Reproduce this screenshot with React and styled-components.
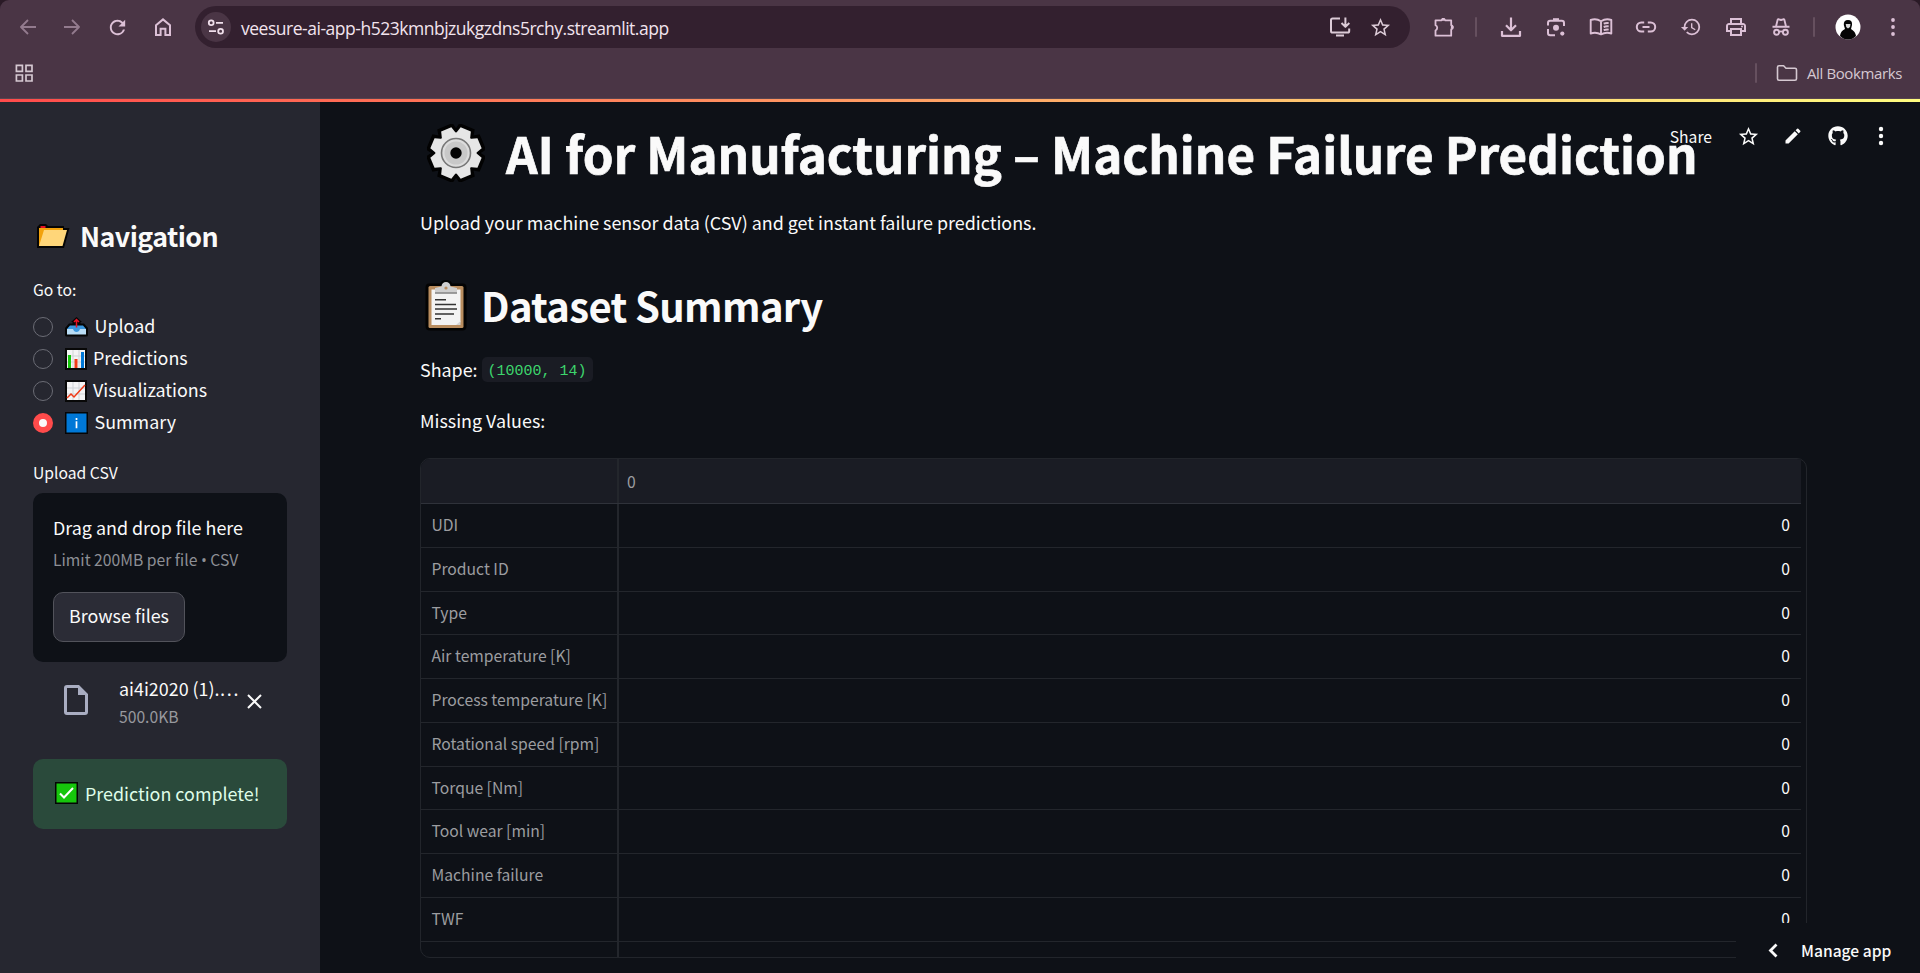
import React from "react";
import styled, { createGlobalStyle } from "styled-components";
import { FaGithub } from "react-icons/fa";
import { MdHistory, MdOutlinePrint, MdEdit, MdStarBorder, MdRefresh } from "react-icons/md";

const Global = createGlobalStyle`
  * { box-sizing: border-box; }
  html, body { margin: 0; height: 973px; overflow: hidden; background: #0e1117; }
  body { font-family: "Noto Sans CJK SC", "Open Sans", sans-serif; color: #fafafa; }
  svg { display: block; flex: none; }
  h1, h2, h3, p { margin: 0; }
`;

const Window = styled.div`
  width: 1920px;
  height: 973px;
  display: flex;
  flex-direction: column;
  overflow: hidden;
`;

/* browser chrome */
const ChromeBack = styled.div`
  background: #2a1a26;
  height: 99px;
  flex: none;
`;
const Chrome = styled.div`
  height: 99px;
  background: #4a3545;
  border-radius: 9px 9px 0 0;
  border-bottom: 1px solid #57454f;
  color: #dcc0d6;
  font-family: "Open Sans", "Noto Sans", sans-serif;
`;
const Toolbar = styled.div`
  height: 54px;
  display: flex;
  align-items: center;
  padding-left: 5px;
`;
const ToolSlot = styled.div`
  width: 45px;
  height: 32px;
  display: flex;
  align-items: center;
  justify-content: center;
  opacity: ${(p) => (p.$dim ? 0.5 : 1)};
`;
const Omnibox = styled.div`
  width: 1215px;
  height: 42px;
  margin-left: 10px;
  border-radius: 21px;
  background: #33202f;
  display: flex;
  align-items: center;
  padding: 0 10px 0 6px;
`;
const SiteInfo = styled.div`
  width: 30px;
  height: 30px;
  border-radius: 50%;
  background: #4a3545;
  display: flex;
  align-items: center;
  justify-content: center;
  color: #f0dfeb;
`;
const Url = styled.span`
  flex: 1;
  margin-left: 10px;
  padding-top: 1px;
  font-size: 17.5px;
  line-height: 24px;
  letter-spacing: -0.48px;
  color: #f2e4ee;
  white-space: nowrap;
`;
const OmniIcon = styled.div`
  width: 40px;
  display: flex;
  justify-content: center;
  color: #dccbd7;
`;
const Tools = styled.div`
  display: flex;
  align-items: center;
  padding-left: 11px;
`;
const Split = styled.div`
  width: 2px;
  height: 20px;
  border-radius: 1px;
  background: #66505f;
  margin: 0 ${(p) => p.$right}px 0 ${(p) => p.$left}px;
`;
const BookmarkBar = styled.div`
  height: 37px;
  display: flex;
  align-items: center;
  padding-left: 15px;
  color: #d5c8d1;
`;
const AllBookmarks = styled.div`
  display: flex;
  align-items: center;
  margin-left: auto;
  margin-right: 18px;
  font-size: 15px;
  letter-spacing: -0.38px;
  white-space: nowrap;
  gap: 9px;
`;

/* app shell */
const Decoration = styled.div`
  height: 3px;
  flex: none;
  background: linear-gradient(90deg, #ff4b4b, #fffd80);
`;
const AppBody = styled.div`
  flex: 1;
  min-height: 0;
  display: flex;
  position: relative;
`;
const Sidebar = styled.aside`
  width: 320px;
  background: #262730;
  padding: 116px 33px 0;
  flex: none;
`;
const NavTitle = styled.h2`
  height: 36px;
  display: flex;
  align-items: center;
  gap: 10px;
  padding-left: 3px;
  font-size: 26.8px;
  line-height: 36px;
  font-weight: 600;
  letter-spacing: -0.55px;
`;
const FieldLabel = styled.div`
  height: 26px;
  margin-top: ${(p) => p.$top}px;
  font-size: 15.7px;
  line-height: 26px;
  white-space: nowrap;
`;
const RadioGroup = styled.div`
  margin-top: 8px;
`;
const RadioRow = styled.div`
  height: 32px;
  display: flex;
  align-items: center;
`;
const RadioDot = styled.span`
  width: 20px;
  height: 20px;
  border-radius: 50%;
  border: ${(p) => (p.$on ? "6px solid #ff4b4b" : "1px solid #6b6c75")};
  background: ${(p) => (p.$on ? "#fafafa" : "#262730")};
  margin-right: 12px;
`;
const RadioText = styled.span`
  font-size: 17.9px;
  line-height: 30px;
  padding-bottom: 4px;
  margin-left: ${(p) => p.$gap}px;
`;
const Dropzone = styled.div`
  height: 169px;
  margin-top: 7px;
  border-radius: 10px;
  background: #0e1117;
  padding: 19px 20px 0;
  white-space: nowrap;
`;
const DropText = styled.div`
  font-size: 17.9px;
  line-height: 30px;
`;
const DropHint = styled.div`
  height: 26px;
  margin-top: 5px;
  font-size: 15.7px;
  line-height: 26px;
  color: #8d8f95;
`;
const Bullet = styled.span`
  font-family: "Open Sans", sans-serif;
  line-height: 20px;
`;
const Browse = styled.button`
  display: block;
  width: 132px;
  height: 50px;
  margin-top: 19px;
  padding: 0 0 4px;
  border: 1px solid #52535b;
  border-radius: 10px;
  background: #2b2c36;
  color: #fafafa;
  font: 17.9px "Noto Sans CJK SC", sans-serif;
  white-space: nowrap;
`;
const FileRow = styled.div`
  display: flex;
  margin-top: 11px;
  height: 57px;
  padding-left: 31px;
`;
const FileIcon = styled.div`
  padding-top: 12px;
  width: 55px;
`;
const FileInfo = styled.div`
  width: 121px;
  white-space: nowrap;
`;
const FileName = styled.div`
  font-size: 17.9px;
  line-height: 30px;
`;
const FileSize = styled.div`
  padding-top: 1px;
  font-size: 15.7px;
  line-height: 26px;
  color: #98999e;
`;
const FileClose = styled.div`
  padding: 21px 0 0 7px;
`;
const Success = styled.div`
  height: 70px;
  margin-top: 29px;
  border-radius: 10px;
  background: #2a4a3b;
  color: #dffde9;
  display: flex;
  align-items: center;
  gap: 7px;
  padding: 0 0 3px 22px;
  font-size: 17.9px;
  white-space: nowrap;
`;

/* main column */
const Main = styled.main`
  flex: 1;
  padding: 15px 112px 0 100px;
`;
const PageTitle = styled.h1`
  height: 72px;
  display: flex;
  align-items: center;
  gap: 21px;
  padding-left: 7px;
  font-size: 49.3px;
  line-height: 72px;
  font-weight: 700;
  white-space: nowrap;
  -webkit-text-stroke: 0.7px #fafafa;
`;
const Section = styled.h2`
  height: 54px;
  margin-top: 41px;
  padding-left: 5px;
  display: flex;
  align-items: center;
  gap: 14px;
  font-size: 40px;
  line-height: 54px;
  font-weight: 600;
  letter-spacing: -0.68px;
  white-space: nowrap;
`;
const Paragraph = styled.p`
  height: 30px;
  margin-top: ${(p) => p.$top}px;
  font-size: 17.9px;
  line-height: 30px;
  white-space: nowrap;
  display: flex;
  align-items: center;
`;
const Code = styled.code`
  width: 111px;
  height: 25px;
  margin-left: 4px;
  border-radius: 5px;
  background: #1a1c24;
  color: #3dd56d;
  font: 15px "Liberation Mono", monospace;
  line-height: 29px;
  text-align: center;
`;
const Table = styled.div`
  width: 1387px;
  height: 500px;
  margin-top: 23px;
  border: 1px solid #22252b;
  border-radius: 10px;
  overflow: hidden;
  font-size: 15.7px;
`;
const Row = styled.div`
  width: 1380px;
  height: ${(p) => (p.$head ? 45 : 43.77)}px;
  display: flex;
  background: ${(p) => (p.$head ? "#1a1c24" : "transparent")};
  border-bottom: 1px solid ${(p) => (p.$head ? "#2f323a" : "#23262c")};
`;
const IndexCell = styled.div`
  width: 198px;
  padding: 8px 0 0 10.5px;
  border-right: 2px solid #23262c;
  color: #9c9da0;
  line-height: 26px;
  white-space: nowrap;
`;
const HeadCell = styled.div`
  flex: 1;
  padding: 10px 0 0 8px;
  color: #9c9da0;
  line-height: 26px;
`;
const ValueCell = styled.div`
  flex: 1;
  padding: 8px 11px 0 0;
  line-height: 26px;
  text-align: right;
`;

/* overlays */
const AppActions = styled.div`
  position: absolute;
  top: 18px;
  right: 8px;
  height: 32px;
  display: flex;
  align-items: center;
`;
const Share = styled.span`
  font-size: 15.7px;
  line-height: 26px;
  margin-right: 24px;
  padding-top: 1px;
`;
const Action = styled.div`
  width: ${(p) => p.$w}px;
  display: flex;
  justify-content: center;
`;
const ManageApp = styled.div`
  position: absolute;
  right: 0;
  bottom: 0;
  width: 184px;
  height: 50px;
  background: #0e1117;
  display: flex;
  align-items: center;
  gap: 23px;
  padding: 4px 0 0 32px;
  font-size: 15.6px;
  font-weight: 500;
  white-space: nowrap;
`;

const Line = ({ w = 20, h = 20, sw = 1.8, box, children }) => (
  <svg width={w} height={h} viewBox={box || `0 0 ${w} ${h}`} fill="none" stroke="currentColor" strokeWidth={sw} strokeLinejoin="round">
    {children}
  </svg>
);

const BackIcon = () => (
  <Line w={18} h={18}><path d="M17 9H2.5M9 2 2 9l7 7" /></Line>
);
const ForwardIcon = () => (
  <Line w={18} h={18}><path d="M0 9h14.500M8 2l7 7-7 7" /></Line>
);
const HomeIcon = () => (
  <Line w={18} h={20} sw={2}><path d="M2 8.2 9 2.4l7 5.8V18h-4.6v-6.2H6.6V18H2Z" strokeLinejoin="miter" /></Line>
);
const TuneIcon = () => (
  <Line w={18} h={16}>
    <circle cx="4.2" cy="3.8" r="2.4" /><path d="M9 3.8h7M2 12.2h7" /><circle cx="13.6" cy="12.2" r="2.4" />
  </Line>
);
const InstallIcon = () => (
  <Line w={22} h={22} sw={2}>
    <path d="M11 2.5H3.6Q2 2.5 2 4v11q0 1.6 1.6 1.6h15q1.6 0 1.6-1.6v-2.5M16.4 1.5v9M12.5 7l3.9 3.9L20.3 7M7 19.5h8" />
  </Line>
);
const PuzzleIcon = () => (
  <Line w={22} h={22}>
    <path d="M2.5 4.3h5.8a2.2 2.2 0 0 1 4 0h5.9v4.9a2.2 2.2 0 0 1 0 4.2v6.3H2.5v-5.2a2.9 2.9 0 0 0 0-5.3Z" />
    <path d="M9 3.4h2.6M19.2 10v2.6" strokeWidth="2.6" />
  </Line>
);
const DownloadIcon = () => (
  <Line w={22} h={22} sw={2.2}><path d="M11 1.5v12.5M6 9.3l5 5 5-5M2 15v4.8h18V15" /></Line>
);
const LensIcon = () => (
  <Line w={20} h={20} sw={2}>
    <path d="M2 8.5V6q0-2.2 2.2-2.2h11.6Q18 3.8 18 6v3M2 12v4q0 2.2 2.2 2.2H9" />
    <path d="M7 2.4h6" strokeWidth="2.4" />
    <circle cx="10" cy="10.7" r="3" fill="currentColor" stroke="none" />
    <circle cx="16.3" cy="16.6" r="2.1" fill="currentColor" stroke="none" />
  </Line>
);
const BookIcon = () => (
  <Line w={24} h={20} sw={1.9}>
    <path d="M12 4.2Q7 1 1.7 3v13.500Q7 14.600 12 17.400Q17 14.600 22.300 16.500V3Q17 1 12 4.200Zm0 0v13.200M14.700 6.700q2.500-1 5-.6M14.700 10q2.500-1 5-.6M14.700 13.200q2.500-1 5-.6" />
  </Line>
);
const LinkIcon = () => (
  <Line w={22} h={14} sw={2}><path d="M9.2 2.500H6.300a4.500 4.500 0 0 0 0 9h2.900M12.800 2.500h2.900a4.500 4.500 0 0 1 0 9h-2.900M7.500 7h7" /></Line>
);
const IncognitoIcon = () => (
  <Line w={20} h={20} sw={1.9}>
    <path d="M1.500 9.800h17M5 9.500 6.600 2.900q.3-.8 1.200-.6L10 3l2.200-.7q.9-.2 1.200.6L15 9.500M8 15q2-1.200 4 0" />
    <circle cx="5.6" cy="15.3" r="2.5" /><circle cx="14.4" cy="15.3" r="2.5" />
  </Line>
);
const Dots = ({ r = 1.9 }) => (
  <svg width="6" height="20" viewBox="0 0 6 20" fill="currentColor">
    <circle cx="3" cy="3" r={r} /><circle cx="3" cy="10" r={r} /><circle cx="3" cy="17" r={r} />
  </svg>
);
const Avatar = () => (
  <svg width="26" height="26" viewBox="0 0 26 26">
    <circle cx="13" cy="13" r="12.5" fill="#fff" />
    <path d="M5 22q.5-5 5-7l-1.200-4Q8.500 6 13 6t4 5l-1 4q4.500 2.500 5 7-3.500 3.500-8 3.500T5 22Z" fill="#050505" />
    <path d="M10.700 10h4.800l-.5 3-2 1.500-1.800-1.500Z" fill="#d8d8d8" />
  </svg>
);
const AppsIcon = () => (
  <Line w={18} h={18} sw={1.7}><path d="M1.400 1.400h6v6h-6zM11 1.400h6v6h-6zM1.400 11h6v6h-6zM11 11h6v6h-6z" strokeLinejoin="miter" /></Line>
);
const FolderLine = () => (
  <Line w={22} h={18} sw={1.6}><path d="M1.500 14.700V3.300q0-1.500 1.500-1.500h4.600l2.400 2.400h9q1.500 0 1.500 1.500v9q0 1.500-1.500 1.500H3q-1.500 0-1.500-1.500Z" /></Line>
);
const FileOutline = () => (
  <svg width="24" height="30" viewBox="0 0 24 30">
    <path d="M3 0h12l9 9v18q0 3-3 3H3q-3 0-3-3V3q0-3 3-3Zm0 3v24h18V10h-7V3Z" fill="#a9adc1" fillRule="evenodd" />
  </svg>
);

const FolderEmoji = () => (
  <svg width="34" height="25" viewBox="0 0 34 25">
    <path d="M1 24V3l3-3h6l2 2h16v2h5.500L28 24Z" fill="#050505" />
    <path d="M3 22V4h24v4L22 22Z" fill="#f2a20c" />
    <path d="M4.500 2h5v2h-5z" fill="#e81123" />
    <path d="M8 6h23l-4.500 16H3Z" fill="#ffd679" />
  </svg>
);
const UploadEmoji = () => (
  <svg width="23" height="20" viewBox="0 0 23 20">
    <path d="M1.500 19.500Q0 19.500 0 18v-7l4-4.500h3.500V5H6L11.500 0 17 5h-1.500v1.500H19l4 4.500v7q0 1.500-1.500 1.500Z" fill="#050505" />
    <path d="M2 12h19v5.500H2Z" fill="#b9dcf5" />
    <path d="M5 8.500h13l3 3.500h-6q-1 3-3.500 3T8 12H2Z" fill="#3a96dd" />
    <path d="M11.500 2.500v8M9 5l2.500-2.500L14 5" fill="none" stroke="#e81123" strokeWidth="1.500" />
  </svg>
);
const SheetGrid = ({ children }) => (
  <svg width="22" height="22" viewBox="0 0 22 22">
    <path d="M0 0h22v22H0z" fill="#080808" />
    <path d="M2 2h18v18H2z" fill="#f4f4f4" />
    <path d="M8 2v18M14 2v18M2 8h18M2 14h18" stroke="#d0d3d6" strokeWidth="1" />
    {children}
  </svg>
);
const BarsEmoji = () => (
  <SheetGrid>
    <path d="M3 7h3v13H3z" fill="#16c60c" /><path d="M9.500 11h3v9h-3z" fill="#f03a17" /><path d="M16 4h3v16h-3z" fill="#0078d7" />
  </SheetGrid>
);
const ChartEmoji = () => (
  <SheetGrid><path d="m2 18 4-4 3 3L20 5" fill="none" stroke="#f03a17" strokeWidth="1.500" /></SheetGrid>
);
const InfoEmoji = () => (
  <svg width="23" height="22" viewBox="0 0 23 22">
    <path d="M0 0h23v22H0z" fill="#050505" /><path d="M1.500 1.500h20v19h-20z" fill="#0078d7" />
    <path d="M11.500 6v2M11.500 9.300v7" stroke="#fff" strokeWidth="1.700" />
  </svg>
);
const CheckEmoji = () => (
  <svg width="23" height="22" viewBox="0 0 23 22">
    <path d="M0 0h23v22H0z" fill="#050505" /><path d="M1.500 1.500h20v19h-20z" fill="#16c60c" />
    <path d="m5 11.500 4 4 9-9.500" fill="none" stroke="#fff" strokeWidth="2" />
  </svg>
);
const gearTeeth = [22.5, 67.5, 112.5, 157.5, 202.5, 247.5, 292.5, 337.5];
const GearEmoji = () => (
  <svg width="58" height="58" viewBox="-29 -29 58 58">
    <g fill="#e6e6e6" stroke="#020202" strokeWidth="8">
      <circle r="20.5" />
      {gearTeeth.map((a) => <path key={a} transform={`rotate(${a})`} d="M-6.500-17-5-25H5L6.500-17Z" />)}
    </g>
    <g fill="#e6e6e6">
      <circle r="20.5" />
      {gearTeeth.map((a) => <path key={a} transform={`rotate(${a})`} d="M-8-17-5.500-25.500H5.500L8-17Z" />)}
    </g>
    <circle r="14.5" fill="#dcdcdc" stroke="#777" strokeWidth="1.6" />
    <circle r="11.5" fill="#c8c8c8" />
    <circle r="5.7" fill="#020202" />
  </svg>
);
const ClipboardEmoji = () => (
  <svg width="42" height="51" viewBox="0 0 42 51">
    <path d="M4 3.500h11Q16 0 21 0t6 3.500h11q3.500 0 3.500 4V46q0 4.500-4 4.500H5Q.5 50.500.5 46V7.500q0-4 3.500-4Z" fill="#030303" />
    <rect x="3.500" y="6" width="35" height="42" rx="1.5" fill="#b98d5f" />
    <path d="M6.500 9.500h29V42l-3 3h-26z" fill="#f3f3f3" />
    <path d="M35.500 41v4H31Z" fill="#d5d5d5" />
    <path d="M10 9V8l6.500-1.500a4.500 4.500 0 0 1 9 0L32 8v4.500H10Z" fill="#cfcfcf" />
    <path d="M10 13h22" stroke="#777" strokeWidth="1.4" />
    <circle cx="21" cy="8" r="1.6" fill="#b98d5f" />
    <path d="M10 19.800h11M10 24.500h21M10 29h22M10 34h19M10 38.700h6" stroke="#333" strokeWidth="1.6" />
  </svg>
);

const navItems = [
  { label: "Upload", Icon: UploadEmoji, gap: 6.5 },
  { label: "Predictions", Icon: BarsEmoji, gap: 6 },
  { label: "Visualizations", Icon: ChartEmoji, gap: 6 },
  { label: "Summary", Icon: InfoEmoji, gap: 6.5, on: true },
];
const columns = ["UDI", "Product ID", "Type", "Air temperature [K]", "Process temperature [K]", "Rotational speed [rpm]", "Torque [Nm]", "Tool wear [min]", "Machine failure", "TWF"];

export default function App() {
  return (
    <Window>
      <Global />
      <ChromeBack>
        <Chrome>
          <Toolbar>
            <ToolSlot $dim><BackIcon /></ToolSlot>
            <ToolSlot $dim><ForwardIcon /></ToolSlot>
            <ToolSlot><MdRefresh size={23} /></ToolSlot>
            <ToolSlot><HomeIcon /></ToolSlot>
            <Omnibox>
              <SiteInfo><TuneIcon /></SiteInfo>
              <Url>veesure-ai-app-h523kmnbjzukgzdns5rchy.streamlit.app</Url>
              <OmniIcon><InstallIcon /></OmniIcon>
              <OmniIcon><MdStarBorder size={23} /></OmniIcon>
            </Omnibox>
            <Tools>
              <ToolSlot><PuzzleIcon /></ToolSlot>
              <Split $left={9} $right={11} />
              <ToolSlot><DownloadIcon /></ToolSlot>
              <ToolSlot><LensIcon /></ToolSlot>
              <ToolSlot><BookIcon /></ToolSlot>
              <ToolSlot><LinkIcon /></ToolSlot>
              <ToolSlot><MdHistory size={22} /></ToolSlot>
              <ToolSlot><MdOutlinePrint size={24} /></ToolSlot>
              <ToolSlot><IncognitoIcon /></ToolSlot>
              <Split $left={10} $right={10} />
              <ToolSlot><Avatar /></ToolSlot>
              <ToolSlot><Dots /></ToolSlot>
            </Tools>
          </Toolbar>
          <BookmarkBar>
            <AppsIcon />
            <AllBookmarks>
              <Split $left={0} $right={10} />
              <FolderLine />
              <span>All Bookmarks</span>
            </AllBookmarks>
          </BookmarkBar>
        </Chrome>
      </ChromeBack>
      <Decoration />
      <AppBody>
        <Sidebar>
          <NavTitle><FolderEmoji />Navigation</NavTitle>
          <FieldLabel $top={23}>Go to:</FieldLabel>
          <RadioGroup>
            {navItems.map(({ label, Icon, gap, on }) => (
              <RadioRow key={label}>
                <RadioDot $on={on} />
                <Icon />
                <RadioText $gap={gap}>{label}</RadioText>
              </RadioRow>
            ))}
          </RadioGroup>
          <FieldLabel $top={21}>Upload CSV</FieldLabel>
          <Dropzone>
            <DropText>Drag and drop file here</DropText>
            <DropHint>Limit 200MB per file <Bullet>•</Bullet> CSV</DropHint>
            <Browse>Browse files</Browse>
          </Dropzone>
          <FileRow>
            <FileIcon><FileOutline /></FileIcon>
            <FileInfo>
              <FileName>ai4i2020 (1).…</FileName>
              <FileSize>500.0KB</FileSize>
            </FileInfo>
            <FileClose><Line w={15} h={15} sw={2}><path d="m1 1 13 13M14 1 1 14" /></Line></FileClose>
          </FileRow>
          <Success><CheckEmoji />Prediction complete!</Success>
        </Sidebar>
        <Main>
          <PageTitle><GearEmoji />AI for Manufacturing – Machine Failure Prediction</PageTitle>
          <Paragraph $top={18}>Upload your machine sensor data (CSV) and get instant failure predictions.</Paragraph>
          <Section><ClipboardEmoji />Dataset Summary</Section>
          <Paragraph $top={22}>Shape:<Code>(10000, 14)</Code></Paragraph>
          <Paragraph $top={21}>Missing Values:</Paragraph>
          <Table>
            <Row $head><IndexCell /><HeadCell>0</HeadCell></Row>
            {columns.map((name) => (
              <Row key={name}><IndexCell>{name}</IndexCell><ValueCell>0</ValueCell></Row>
            ))}
            <Row><IndexCell /></Row>
          </Table>
        </Main>
        <AppActions>
          <Share>Share</Share>
          <Action $w={24}><MdStarBorder size={23} /></Action>
          <Action $w={66}><MdEdit size={20} /></Action>
          <Action $w={24}><FaGithub size={20} /></Action>
          <Action $w={62}><Dots r={2.2} /></Action>
        </AppActions>
        <ManageApp>
          <Line w={10} h={15} sw={2.8}><path d="M8.500 1.500 2.500 7.500l6 6" strokeLinejoin="miter" /></Line>
          Manage app
        </ManageApp>
      </AppBody>
    </Window>
  );
}
